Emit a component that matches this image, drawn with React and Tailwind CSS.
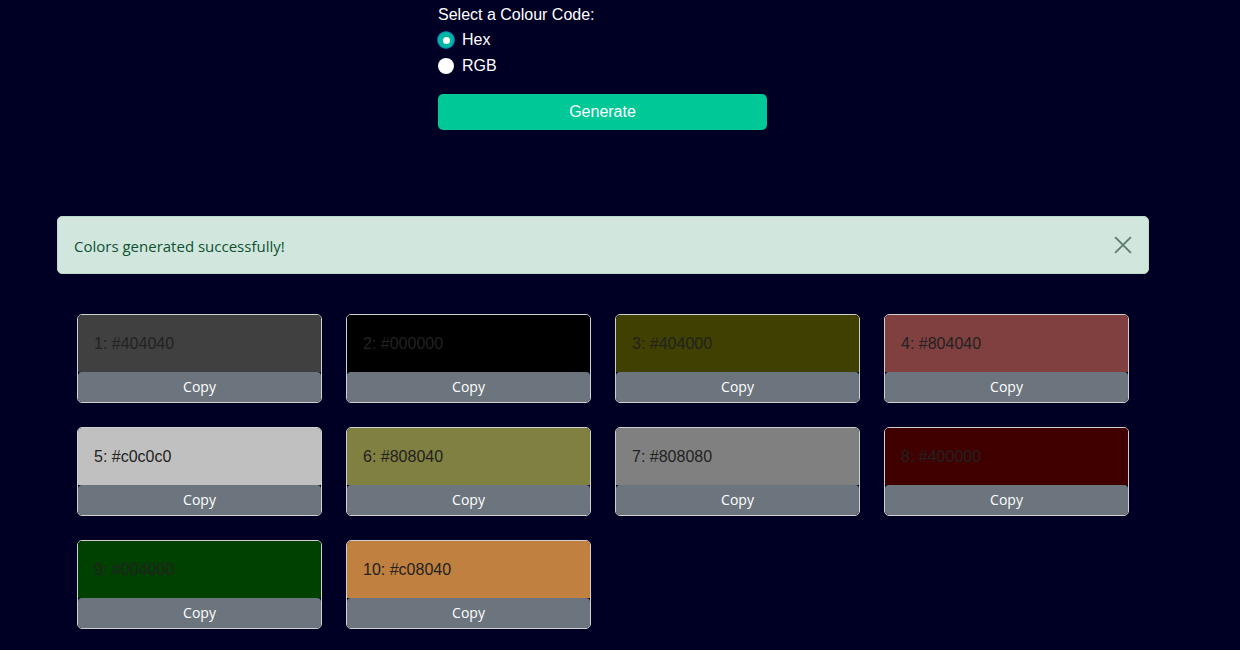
import { useState } from 'react'

const COLORS = ['#404040', '#000000', '#404000', '#804040', '#c0c0c0', '#808040', '#808080', '#400000', '#004000', '#c08040']

const Radio = ({ checked, label, onClick }) => (
  <label onClick={onClick} className="flex items-center gap-2 h-[26px] cursor-pointer">
    {checked ? (
      <span className="w-4 h-4 rounded-full bg-[#00b8a0] ring-1 ring-[#0a6fc0] flex items-center justify-center">
        <span className="w-[7px] h-[7px] rounded-full bg-white" />
      </span>
    ) : (
      <span className="w-4 h-4 rounded-full bg-white" />
    )}
    <span className="text-white text-base">{label}</span>
  </label>
)

const Swatch = ({ i, hex }) => (
  <div className="w-[245px] h-[89px] border border-[#d0d0d0] rounded-[5px] overflow-hidden flex flex-col">
    <div className="h-[57px] flex items-center pl-4 text-[#222] text-base font-['Liberation_Sans',sans-serif]" style={{ background: hex }}>
      {i + 1}: {hex}
    </div>
    <button className="flex-1 bg-[#6c757d] text-white text-sm rounded-t-[4px] font-['Open_Sans',sans-serif]">Copy</button>
  </div>
)

export default function App() {
  const [mode, setMode] = useState('hex')
  return (
    <div className="min-h-[650px] bg-[#000025] font-['Liberation_Sans',sans-serif]">
      <div className="w-[329px] ml-[438px] pt-[5px]">
        <p className="text-white text-base leading-5">Select a Colour Code:</p>
        <div className="mt-[2px]">
          <Radio checked={mode === 'hex'} label="Hex" onClick={() => setMode('hex')} />
          <Radio checked={mode === 'rgb'} label="RGB" onClick={() => setMode('rgb')} />
        </div>
        <button className="mt-[15px] w-full h-9 rounded-[5px] bg-[#00c896] text-white text-base">Generate</button>
      </div>

      <div className="mx-[57px] w-[1092px] mt-[86px] h-[58px] rounded-[5px] bg-[#d1e7dd] border border-[#badbcc] flex items-center justify-between pl-4 pr-4 font-['Open_Sans',sans-serif]">
        <span className="text-[#0f5132] text-[15px] pt-[2px]">Colors generated successfully!</span>
        <svg width="18" height="18" viewBox="0 0 16 16">
          <path d="M1 1L15 15M15 1L1 15" stroke="#5f7a6e" strokeWidth="1.6" />
        </svg>
      </div>

      <div className="ml-[77px] mt-[40px] grid grid-cols-[repeat(4,245px)] gap-x-[24px] gap-y-[24px]">
        {COLORS.map((c, i) => <Swatch key={i} i={i} hex={c} />)}
      </div>
    </div>
  )
}
